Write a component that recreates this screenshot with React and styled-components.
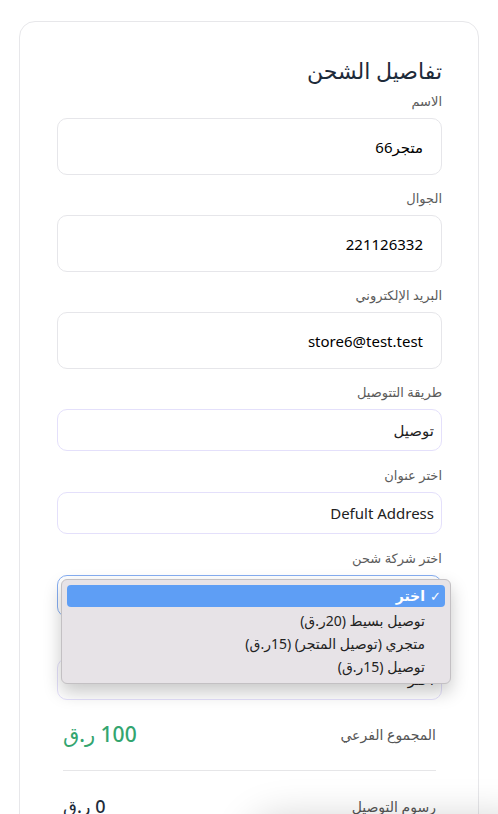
import React from "react";
import styled, { createGlobalStyle } from "styled-components";

const GlobalStyle = createGlobalStyle`
  html, body {
    margin: 0;
    padding: 0;
    background: #ffffff;
    font-family: "Noto Sans", "DejaVu Sans", sans-serif;
    overflow: hidden;
  }
`;

const fields = [
  { label: "الاسم", value: "متجر66", kind: "tall" },
  { label: "الجوال", value: "221126332", kind: "tall" },
  { label: "البريد الإلكتروني", value: "store6@test.test", kind: "tall" },
  { label: "طريقة التتوصيل", value: "توصيل", kind: "short" },
  { label: "اختر عنوان", value: "Defult Address", kind: "short" },
];

const options = [
  "توصيل بسيط (20ر.ق)",
  "متجري (توصيل المتجر) (15ر.ق)",
  "توصيل (15ر.ق)",
];

function App() {
  return (
    <>
      <GlobalStyle />
      <Card dir="rtl">
        <Title>تفاصيل الشحن</Title>
        {fields.map((f) => (
          <Field key={f.label} $kind={f.kind}>
            <Label>{f.label}</Label>
            <Input $kind={f.kind}>{f.value}</Input>
          </Field>
        ))}
        <Field $kind="short">
          <Label>اختر شركة شحن</Label>
          <SelectWrap>
            <Input $kind="focus" />
            <Menu>
              <MenuItem $active>
                <Check>✓</Check>
                اختر
              </MenuItem>
              {options.map((o) => (
                <MenuItem key={o}>
                  <Check />
                  {o}
                </MenuItem>
              ))}
            </Menu>
          </SelectWrap>
        </Field>
        <Field $kind="short">
          <Label>اختر المنطقة</Label>
          <Input $kind="short">اختر</Input>
        </Field>
        <Summary>
          <Row>
            <RowLabel>المجموع الفرعي</RowLabel>
            <Amount $green>100 ر.ق</Amount>
          </Row>
          <Divider />
          <Row>
            <RowLabel>رسوم التوصيل</RowLabel>
            <Amount>0 ر.ق</Amount>
          </Row>
        </Summary>
      </Card>
      <FloatShadow />
    </>
  );
}

const Card = styled.div`
  margin: 21px 19px 0 19px;
  padding: 32px 36px 40px 37px;
  border: 1px solid #e7e7ea;
  border-radius: 16px;
  display: flex;
  flex-direction: column;
`;

const Title = styled.h2`
  margin: 0 0 5px 0;
  font-size: 22px;
  line-height: 32px;
  font-weight: 500;
  color: #1e2b3a;
`;

const Field = styled.div`
  display: flex;
  flex-direction: column;
  margin-bottom: ${(p) => (p.$kind === "tall" ? "13px" : "14px")};
`;

const Label = styled.label`
  font-size: 13px;
  line-height: 20px;
  height: 20px;
  color: #5b5b5b;
  margin-bottom: 7px;
`;

const Input = styled.div`
  box-sizing: border-box;
  height: ${(p) => (p.$kind === "tall" ? "57px" : "42px")};
  display: flex;
  align-items: center;
  padding: 0 ${(p) => (p.$kind === "tall" ? "18px" : "7px")};
  border: 1px solid
    ${(p) =>
      p.$kind === "tall" ? "#e6e6ea" : p.$kind === "focus" ? "#86aef2" : "#e4e0fb"};
  border-radius: 10px;
  font-size: 15px;
  color: ${(p) => (p.$kind === "tall" ? "#000" : "#222")};
  background: #fff;
`;

const SelectWrap = styled.div`
  position: relative;
`;

const Menu = styled.div`
  position: absolute;
  top: 4px;
  right: -9px;
  width: 390px;
  box-sizing: border-box;
  padding: 5px;
  background: #e7e3e7;
  border: 1px solid #c3c0c3;
  border-radius: 6px;
  box-shadow: 0 8px 18px rgba(0, 0, 0, 0.22);
  z-index: 5;
`;

const MenuItem = styled.div`
  display: flex;
  align-items: center;
  height: ${(p) => (p.$active ? "22px" : "23px")};
  line-height: ${(p) => (p.$active ? "22px" : "23px")};
  padding: 0 4px;
  border-radius: 4px;
  font-size: 14px;
  font-weight: ${(p) => (p.$active ? 700 : 400)};
  background: ${(p) => (p.$active ? "#5e9ef5" : "transparent")};
  color: ${(p) => (p.$active ? "#fff" : "#222")};
  margin-bottom: ${(p) => (p.$active ? "2px" : "0")};
  overflow: hidden;
`;

const Check = styled.span`
  display: inline-block;
  width: 16px;
  font-size: 13px;
  font-weight: 400;
`;

const Summary = styled.div`
  display: flex;
  flex-direction: column;
  padding: 0 6px;
`;

const Row = styled.div`
  display: flex;
  align-items: center;
  justify-content: space-between;
  height: 40px;
`;

const RowLabel = styled.span`
  font-size: 14px;
  color: #555;
`;

const Amount = styled.span`
  font-size: ${(p) => (p.$green ? "21px" : "18px")};
  font-weight: 500;
  color: ${(p) => (p.$green ? "#33a56f" : "#1e2b3a")};
`;

const Divider = styled.div`
  height: 1px;
  background: #e6e6e8;
  margin: 16px 0 15px;
`;

const FloatShadow = styled.div`
  position: fixed;
  left: 250px;
  right: -40px;
  top: 818px;
  height: 60px;
  border-radius: 30px;
  background: #fff;
  box-shadow: 0 0 40px rgba(0, 0, 0, 0.18);
`;

export default App;
